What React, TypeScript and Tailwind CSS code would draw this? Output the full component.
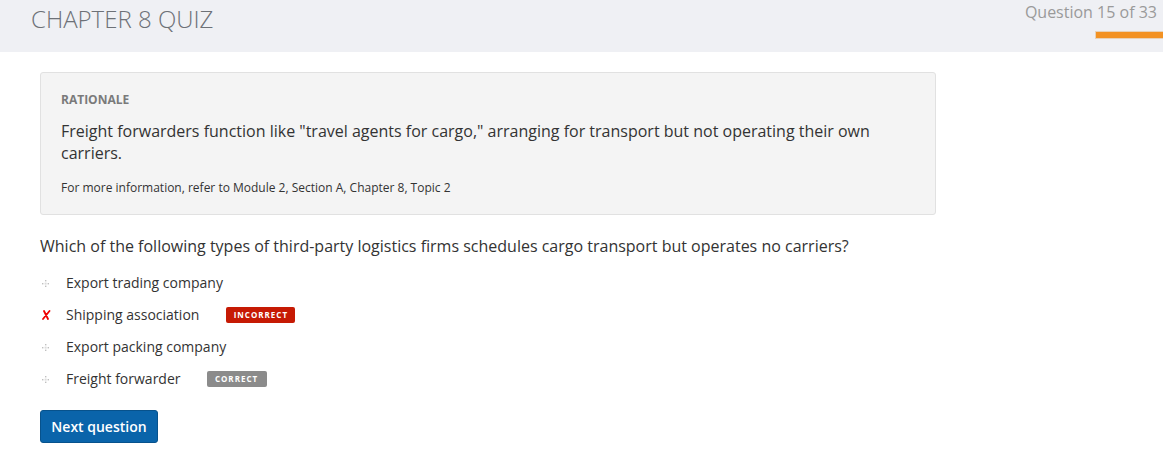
import React from "react";

const Bullet = () => (
  <svg width="7" height="7" viewBox="0 0 7 7" className="block">
    <rect x="3" y="0" width="1.4" height="1.4" fill="#c0c0c0" />
    <rect x="0" y="3" width="1.4" height="1.4" fill="#c0c0c0" />
    <rect x="5.6" y="3" width="1.4" height="1.4" fill="#c0c0c0" />
    <rect x="3" y="5.6" width="1.4" height="1.4" fill="#c0c0c0" />
    <rect x="2.6" y="2.6" width="2" height="2" fill="#dcdcdc" />
  </svg>
);

const Cross = () => (
  <svg width="9" height="10" viewBox="0 0 9 10" className="block">
    <path d="M2 1 L6 9 M7.5 1 L1 9" stroke="#e00" strokeWidth="1.8" strokeLinecap="round" fill="none" />
  </svg>
);

const options: { text: string; mark: "bullet" | "cross"; badge?: "incorrect" | "correct" }[] = [
  { text: "Export trading company", mark: "bullet" },
  { text: "Shipping association", mark: "cross", badge: "incorrect" },
  { text: "Export packing company", mark: "bullet" },
  { text: "Freight forwarder", mark: "bullet", badge: "correct" },
];

export default function App() {
  return (
    <div className="w-[1163px] h-[463px] bg-white text-[#333] overflow-hidden" style={{ fontFamily: '"Open Sans", "Liberation Sans", sans-serif' }}>
      <div className="h-[52px] bg-[#eff0f4] flex justify-between">
        <div className="pl-[31px] pt-[3px] text-[24px] font-light text-[#6d7177] leading-[32px]">CHAPTER 8 QUIZ</div>
        <div className="flex flex-col items-end pt-[1px]">
          <div className="pr-[6px] text-[16px] text-[#9a9a9a] leading-[22px]">Question 15 of 33</div>
          <div className="mt-[8px] w-[68px] h-[8px] bg-[#f39223] border-y border-l border-[#e8d2b8]"></div>
        </div>
      </div>

      <div className="pl-[40px] pt-[20px]">
        <div className="w-[896px] bg-[#f4f4f4] border border-[#e1e1e1] rounded-[3px] pl-[20px] pr-[20px] pt-[17px] pb-[17px]">
          <div className="text-[12px] font-bold text-[#7a7a7a] leading-[20px]">RATIONALE</div>
          <div className="mt-[10px] text-[16px] leading-[22px] text-[#333]">
            Freight forwarders function like "travel agents for cargo," arranging for transport but not operating their own carriers.
          </div>
          <div className="mt-[15px] text-[12px] leading-[18px] text-[#333]">
            For more information, refer to Module 2, Section A, Chapter 8, Topic 2
          </div>
        </div>

        <div className="mt-[20px] text-[16px] leading-[22px] text-[#333]">
          Which of the following types of third-party logistics firms schedules cargo transport but operates no carriers?
        </div>

        <div className="mt-[16px] flex flex-col gap-[12px]">
          {options.map((o) => (
            <div key={o.text} className="flex items-center h-[20px]">
              <div className="w-[26px] flex items-center pl-[2px]">
                {o.mark === "bullet" ? <Bullet /> : <Cross />}
              </div>
              <div className="text-[14px] leading-[20px] text-[#333]">{o.text}</div>
              {o.badge === "incorrect" && (
                <div className="ml-[27px] h-[16px] w-[69px] flex items-center justify-center rounded-[2px] bg-[#c61a04] text-white text-[8px] font-bold tracking-[1px]">INCORRECT</div>
              )}
              {o.badge === "correct" && (
                <div className="ml-[26px] h-[16px] w-[60px] flex items-center justify-center rounded-[2px] bg-[#8b8b8b] text-white text-[8px] font-bold tracking-[1px]">CORRECT</div>
              )}
            </div>
          ))}
        </div>

        <button className="mt-[21px] h-[33px] w-[118px] rounded-[3px] bg-[#0a64aa] border border-[#07528c] text-white text-[14px] font-semibold flex items-center justify-center">
          Next question
        </button>
      </div>
    </div>
  );
}
